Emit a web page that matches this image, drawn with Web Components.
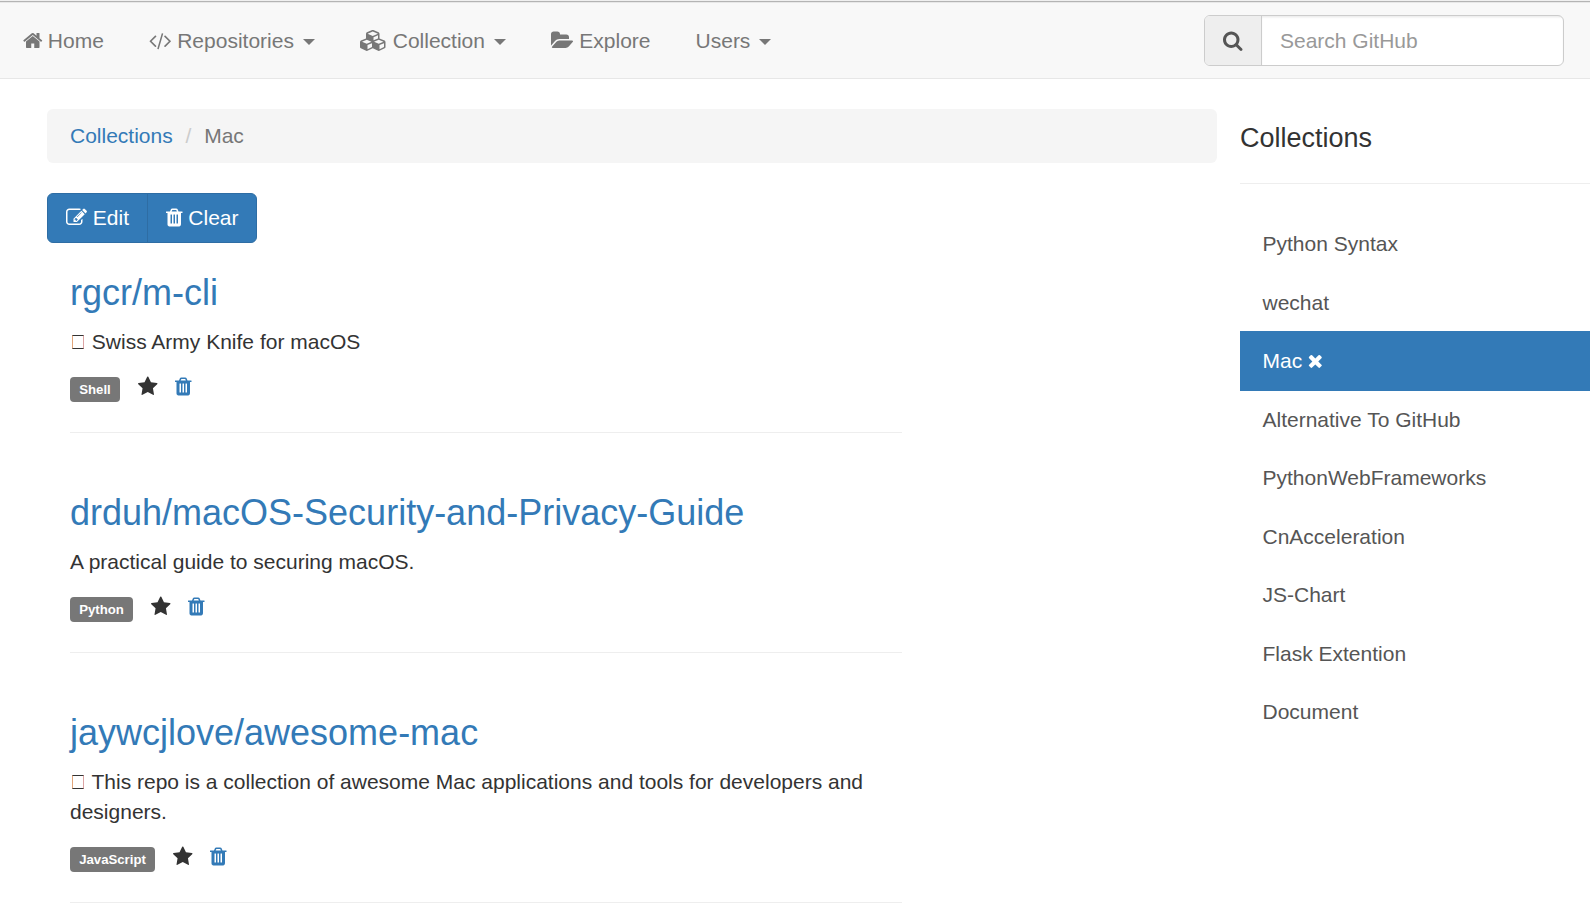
<!DOCTYPE html>
<html lang="en">
<head>
<meta charset="utf-8">
<title>Collections / Mac</title>
<style>
html,body{margin:0;height:916px;overflow:hidden;background:#fff}
body{font:21px/30px "Liberation Sans",Arial,sans-serif;color:#333}
</style>
</head>
<body>
<collections-page></collections-page>
<script>
const ICONS = {
home:['64 0 1664 1792','M1472 992v480q0 26-19 45t-45 19h-384v-384h-256v384h-384q-26 0-45-19t-19-45v-480q0-1 .5-3t.5-3l575-474 575 474q1 2 1 6zm223-69l-62 74q-8 9-21 11h-3q-13 0-21-7l-692-577-692 577q-12 8-24 7-13-2-21-11l-62-74q-8-10-7-23.5t11-21.5l719-599q32-26 76-26t76 26l244 204v-195q0-14 9-23t23-9h192q14 0 23 9t9 23v408l219 182q10 8 11 21.5t-7 23.5z'],
code:['0 0 1920 1792','M617 1399l-50 50q-10 10-23 10t-23-10l-466-466q-10-10-10-23t10-23l466-466q10-10 23-10t23 10l50 50q10 10 10 23t-10 23l-393 393 393 393q10 10 10 23t-10 23zm591-1067l-373 1291q-4 13-15.5 19.5t-23.5 2.5l-62-17q-13-4-19.5-15.5t-2.5-24.5l373-1291q4-13 15.5-19.5t23.5-2.5l62 17q13 4 19.5 15.5t2.5 24.5zm657 651l-466 466q-10 10-23 10t-23-10l-50-50q-10-10-10-23t10-23l393-393-393-393q-10-10-10-23t10-23l50-50q10-10 23-10t23 10l466 466q10 10 10 23t-10 23z'],
cubes:['0 0 2304 1792','M640 1632l384-192v-314l-384 164v342zm-64-454l404-173-404-173-404 173zm1088 454l384-192v-314l-384 164v342zm-64-454l404-173-404-173-404 173zm-448-293l384-165v-266l-384 164v267zm-64-379l441-189-441-189-441 189zm1088 518v416q0 36-19 67t-52 47l-448 224q-25 14-57 14t-57-14l-448-224q-4-2-7-4-2 2-7 4l-448 224q-25 14-57 14t-57-14l-448-224q-33-16-52-47t-19-67v-416q0-38 21.5-70t56.5-48l434-186v-400q0-38 21.5-70t56.5-48l448-192q23-10 50-10t50 10l448 192q35 16 56.5 48t21.5 70v400l434 186q36 16 57 48t21 70z'],
folder:['-64 0 1920 1792','M1815 952q0 31-31 66l-336 396q-43 51-120.5 86.5t-143.5 35.5h-1088q-34 0-60.5-13t-26.5-43q0-31 31-66l336-396q43-51 120.5-86.5t143.5-35.5h1088q34 0 60.5 13t26.5 43zm-343-344v160h-832q-94 0-197 47.5t-164 119.5l-337 396-5 6q0-4-.5-12.5t-.5-12.5v-960q0-92 66-158t158-66h320q92 0 158 66t66 158v32h544q92 0 158 66t66 158z'],
search:['64 0 1664 1792','M1216 832q0-185-131.5-316.5t-316.5-131.5-316.5 131.5-131.5 316.5 131.5 316.5 316.5 131.5 316.5-131.5 131.5-316.5zm512 832q0 52-38 90t-90 38q-54 0-90-38l-343-342q-179 124-399 124-143 0-273.5-55.5t-225-150-150-225-55.5-273.5 55.5-273.5 150-225 225-150 273.5-55.5 273.5 55.5 225 150 150 225 55.5 273.5q0 220-124 399l343 343q37 37 37 90z'],
edit:['0 0 1792 1792','M888 1184l116-116-152-152-116 116v56h96v96h56zm440-720q-16-16-33 1l-350 350q-17 17-1 33t33-1l350-350q17-17 1-33zm80 594v190q0 119-84.5 203.5t-203.5 84.5h-832q-119 0-203.5-84.5t-84.5-203.5v-832q0-119 84.5-203.5t203.5-84.5h832q63 0 117 25 15 7 18 23 3 17-9 29l-49 49q-14 14-32 8-23-6-45-6h-832q-66 0-113 47t-47 113v832q0 66 47 113t113 47h832q66 0 113-47t47-113v-126q0-13 9-22l64-64q15-15 35-7t20 29zm-96-738l288 288-672 672h-288v-288zm444 132l-92 92-288-288 92-92q28-28 68-28t68 28l152 152q28 28 28 68t-28 68z'],
trash:['192 0 1408 1792','M704 1376v-704q0-14-9-23t-23-9h-64q-14 0-23 9t-9 23v704q0 14 9 23t23 9h64q14 0 23-9t9-23zm256 0v-704q0-14-9-23t-23-9h-64q-14 0-23 9t-9 23v704q0 14 9 23t23 9h64q14 0 23-9t9-23zm256 0v-704q0-14-9-23t-23-9h-64q-14 0-23 9t-9 23v704q0 14 9 23t23 9h64q14 0 23-9t9-23zm-544-992h448l-48-117q-7-9-17-11h-317q-10 2-17 11zm928 32v64q0 14-9 23t-23 9h-96v948q0 83-47 143.5t-113 60.5h-832q-66 0-113-58.5t-47-141.5v-952h-96q-14 0-23-9t-9-23v-64q0-14 9-23t23-9h309l70-167q15-37 54-63t79-26h320q40 0 79 26t54 63l70 167h309q14 0 23 9t9 23z'],
star:['64 0 1664 1792','M1728 647q0 22-26 48l-363 354 86 500q1 7 1 20 0 21-10.5 35.5t-30.5 14.5q-19 0-40-12l-449-236-449 236q-22 12-40 12-21 0-31.5-14.5t-10.5-35.5q0-6 2-20l86-500-364-354q-25-27-25-48 0-37 56-46l502-73 225-455q19-41 49-41t49 41l225 455 502 73q56 9 56 46z'],
times:['224 0 1408 1792','M1490 1322q0 40-28 68l-136 136q-28 28-68 28t-68-28l-294-294-294 294q-28 28-68 28t-68-28l-136-136q-28-28-28-68t28-68l294-294-294-294q-28-28-28-68t28-68l136-136q28-28 68-28t68 28l294 294 294-294q28-28 68-28t68 28l136 136q28 28 28 68t-28 68l-294 294 294 294q28 28 28 68z']
};
function define(name, html) {
  customElements.define(name, class extends HTMLElement {
    constructor() {
      super();
      const t = document.createElement('template');
      t.innerHTML = typeof html === 'function' ? html(this) : html;
      this.attachShadow({mode:'open'}).append(t.content.cloneNode(true));
    }
  });
}
define('fa-icon', el => {
  const [box, d] = ICONS[el.getAttribute('name')];
  const w = box.split(' ')[2] / 1792;
  return `<style>:host{display:inline-block;width:${w}em;height:1em;line-height:1;vertical-align:-.143em}svg{display:block;width:100%;height:100%;fill:currentColor;overflow:visible}</style><svg viewBox="${box}"><path d="${d}"/></svg>`;
});
define('nav-link', el => `<style>
:host{display:block;padding:0 22.5px;color:#777;white-space:nowrap}
i{display:inline-block;margin-left:9px;vertical-align:middle;border:6px solid transparent;border-top-color:currentColor;border-bottom:0;position:relative;top:.5px}
</style><slot></slot>${el.hasAttribute('menu') ? '<i></i>' : ''}`);
define('search-box', `<style>
:host{display:flex;box-sizing:border-box;width:360px;height:51px;border:1px solid #ccc;border-radius:6px;background:#fff;overflow:hidden}
.addon{box-sizing:border-box;width:57px;background:#eee;border-right:1px solid #ccc;display:flex;align-items:center;justify-content:center;color:#555}
.field{flex:1;padding:9.5px 18px;color:#999;box-shadow:inset 0 1.5px 1.5px rgba(0,0,0,.075)}
</style><div class="addon"><fa-icon name="search"></fa-icon></div><div class="field">Search GitHub</div>`);
define('nav-bar', `<style>
:host{display:flex;align-items:center;box-sizing:border-box;height:79px;padding:3px 26px 0 0;background:linear-gradient(#f0f0f0 1px,#b4b4b4 1px 2px,#e8e8e8 2px 3px,#f8f8f8 3px);border-bottom:1px solid #e7e7e7}
search-box{margin-left:auto}
</style><slot></slot><search-box></search-box>`);
define('bread-crumb', `<style>
:host{display:block;box-sizing:border-box;height:54px;padding:12px 23px;border-radius:6px;background:#f5f5f5;color:#777}
a{color:#337ab7}i{font-style:normal;color:#ccc;padding:0 12.8px}
</style><a>Collections</a><i>/</i><slot></slot>`);
define('button-group', `<style>
:host{display:flex;box-sizing:border-box;width:210px;height:50px;border:1px solid #2e6da4;border-radius:6px;background:#337ab7;color:#fff}
span{box-sizing:border-box;padding:9px 0 0 18px;white-space:nowrap}
.first{width:100px;border-right:1px solid #2e6da4}
</style><span class="first"><fa-icon name="edit"></fa-icon> Edit</span><span><fa-icon name="trash"></fa-icon> Clear</span>`);
define('empty-glyph', `<style>:host{display:inline-block;box-sizing:border-box;width:12px;height:14px;margin:0 2px 0 2px;vertical-align:0;border:1px solid #333;border-left-color:#e2a67b;border-right-color:#dea4a4}</style>`);
define('lang-label', `<style>:host{display:block;box-sizing:border-box;height:25px;margin-top:5px;border-radius:4px;background:#777;color:#fff;font:bold 13.2px/25px "Liberation Sans",Arial,sans-serif;text-align:center}</style><slot></slot>`);
define('repo-item', el => `<style>
:host{display:block;width:832px;border-bottom:1px solid #eee;padding-bottom:30px;margin-bottom:60px}
h3{margin:0 0 15px;font-size:36px;line-height:39px;font-weight:400;color:#337ab7}
p{margin:0 0 15px}
.meta{display:flex;height:30px}
lang-label{width:${el.getAttribute('lw')}px}
.s{margin:4px 0 0 17.8px;height:21px}.t{margin:4px 0 0 17.6px;color:#337ab7}
</style><h3>${el.getAttribute('repo')}</h3><p><slot></slot></p>
<div class="meta"><lang-label>${el.getAttribute('lang-name')}</lang-label><fa-icon class="s" name="star"></fa-icon><fa-icon class="t" name="trash"></fa-icon></div>`);
define('side-item', `<style>
:host{display:block;height:60px;margin-bottom:-1.5px;padding-left:22.5px;line-height:60px;color:#555}
:host([active]){background:#337ab7;color:#fff}
::slotted(fa-icon){font-size:19.5px}
</style><slot></slot>`);
define('side-bar', `<style>
:host{display:block;width:350px;padding-top:45px}
h4{margin:0 0 30px;font-size:27px;line-height:29px;font-weight:400}
nav{border-top:1px solid #eee;padding-top:30px}
</style><h4>Collections</h4><nav><slot></slot></nav>`);
define('collections-page', `<style>
:host{display:block;height:916px;overflow:hidden}
.cols{display:flex}
main{width:1170px;padding:30px 23px 0 47px}
button-group{margin-top:30px}
.list{padding:30px 0 0 23px}
</style>
<nav-bar><nav-link><fa-icon name="home"></fa-icon> Home</nav-link><nav-link menu><fa-icon name="code"></fa-icon> Repositories</nav-link><nav-link menu><fa-icon name="cubes"></fa-icon> Collection</nav-link><nav-link><fa-icon name="folder"></fa-icon> Explore</nav-link><nav-link menu>Users</nav-link></nav-bar>
<div class="cols"><main><bread-crumb>Mac</bread-crumb><button-group></button-group>
<div class="list">
<repo-item repo="rgcr/m-cli" lang-name="Shell" lw="50"><empty-glyph></empty-glyph> Swiss Army Knife for macOS</repo-item>
<repo-item repo="drduh/macOS-Security-and-Privacy-Guide" lang-name="Python" lw="63">A practical guide to securing macOS.</repo-item>
<repo-item repo="jaywcjlove/awesome-mac" lang-name="JavaScript" lw="85"><empty-glyph></empty-glyph> This repo is a collection of awesome Mac applications and tools for developers and designers.</repo-item>
</div></main>
<side-bar><side-item>Python Syntax</side-item><side-item>wechat</side-item><side-item active>Mac <fa-icon name="times"></fa-icon></side-item><side-item>Alternative To GitHub</side-item><side-item>PythonWebFrameworks</side-item><side-item>CnAcceleration</side-item><side-item>JS-Chart</side-item><side-item>Flask Extention</side-item><side-item>Document</side-item></side-bar></div>`);
</script>
</body>
</html>
